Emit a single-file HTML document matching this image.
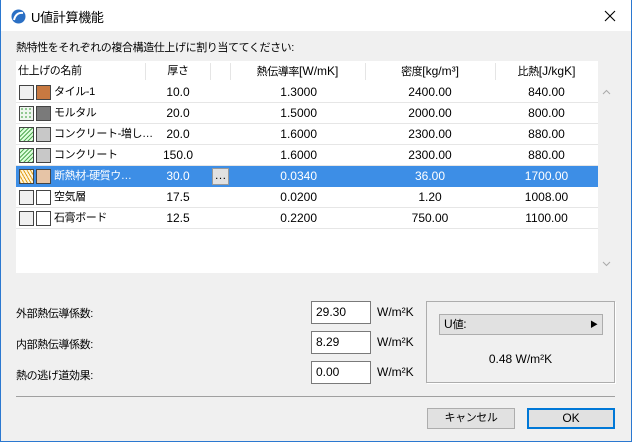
<!DOCTYPE html><html><head><meta charset="utf-8"><style>
*{box-sizing:border-box}
body{margin:0;width:632px;height:442px;overflow:hidden;background:#f0f0f0;font-family:"Liberation Sans","Noto Sans CJK JP",sans-serif;font-size:12px;color:#000;position:relative}
.abs{position:absolute}
.j{font-size:11px;letter-spacing:-0.4px}
.win{position:absolute;left:0;top:0;width:632px;height:442px;border:1px solid #2b78d0;border-top:none}
.title{position:absolute;left:0;top:0;width:632px;height:31px;background:#fff;border-left:1px solid #2b78d0;border-right:1px solid #2b78d0}
.tbl{position:absolute;left:16px;top:61px;width:598px;height:212px;background:#fff}
.row{position:absolute;left:0;width:582px;height:21px;border-bottom:1px solid #e6e6e6;line-height:20px}
.c{position:absolute;top:0;text-align:center}
.sw{position:absolute;top:3px;width:15px;height:15px;border:1px solid #444}
.inp{position:absolute;left:311px;width:60px;height:23px;background:#fff;border:1px solid #7a7a7a;padding-left:4px;line-height:21px}
.btn{position:absolute;height:21px;background:#e1e1e1;border:1px solid #adadad;text-align:center;line-height:19px}
</style></head><body>
<div class="win"></div>
<div class="title">
<svg class="abs" style="left:10px;top:9px" width="15" height="15" viewBox="0 0 15 15"><circle cx="7.5" cy="7.5" r="7" fill="#2a6fc4"/><path d="M3 11 Q5 3 12 4" stroke="#fff" stroke-width="2" fill="none"/></svg>
<div class="abs" style="left:30px;top:7px;font-size:13px;letter-spacing:-0.3px">U値計算機能</div>
<svg class="abs" style="left:603px;top:10px" width="12" height="12" viewBox="0 0 12 12"><path d="M1 1L11 11M11 1L1 11" stroke="#000" stroke-width="1.1"/></svg>
</div>
<div class="abs j" style="left:16px;top:39px">熱特性をそれぞれの複合構造仕上げに割り当ててください:</div>
<div class="tbl">
<div class="row" style="top:0;border-bottom:none;color:#000">
<div class="c j" style="left:2px;text-align:left">仕上げの名前</div>
<div class="c j" style="left:130px;width:64px">厚さ</div>
<div class="c" style="left:214px;width:135px"><span class="j">熱伝導率</span>[W/mK]</div>
<div class="c" style="left:349px;width:130px"><span class="j">密度</span>[kg/m³]</div>
<div class="c" style="left:479px;width:103px"><span class="j">比熱</span>[J/kgK]</div>
<div class="abs" style="left:129px;top:2px;width:1px;height:17px;background:#e5e5e5"></div>
<div class="abs" style="left:194px;top:2px;width:1px;height:17px;background:#e5e5e5"></div>
<div class="abs" style="left:214px;top:2px;width:1px;height:17px;background:#e5e5e5"></div>
<div class="abs" style="left:349px;top:2px;width:1px;height:17px;background:#e5e5e5"></div>
<div class="abs" style="left:479px;top:2px;width:1px;height:17px;background:#e5e5e5"></div>
</div>
<div class="row" style="top:21px"><div class="sw" style="left:3px;background:#f0f0f0"></div><div class="sw" style="left:20px;background:#c87941"></div><div class="c j" style="left:38px">タイル-1</div><div class="c" style="left:130px;width:64px">10.0</div><div class="c" style="left:214px;width:135px;text-align:right;padding-right:48px">1.3000</div><div class="c" style="left:349px;width:130px">2400.00</div><div class="c" style="left:479px;width:103px">840.00</div></div>
<div class="row" style="top:42px"><div class="sw" style="left:3px;background:radial-gradient(#5a5 0.7px,transparent 1px) 0 0/4px 4px #eef5ee"></div><div class="sw" style="left:20px;background:#7a7a7a"></div><div class="c j" style="left:38px">モルタル</div><div class="c" style="left:130px;width:64px">20.0</div><div class="c" style="left:214px;width:135px;text-align:right;padding-right:48px">1.5000</div><div class="c" style="left:349px;width:130px">2000.00</div><div class="c" style="left:479px;width:103px">800.00</div></div>
<div class="row" style="top:63px"><div class="sw" style="left:3px;background:repeating-linear-gradient(-45deg,#5a5 0 1px,#dfd 1px 3px)"></div><div class="sw" style="left:20px;background:#c8c8c8"></div><div class="c j" style="left:38px">コンクリート-増し…</div><div class="c" style="left:130px;width:64px">20.0</div><div class="c" style="left:214px;width:135px;text-align:right;padding-right:48px">1.6000</div><div class="c" style="left:349px;width:130px">2300.00</div><div class="c" style="left:479px;width:103px">880.00</div></div>
<div class="row" style="top:84px"><div class="sw" style="left:3px;background:repeating-linear-gradient(-45deg,#5a5 0 1px,#dfd 1px 3px)"></div><div class="sw" style="left:20px;background:#c8c8c8"></div><div class="c j" style="left:38px">コンクリート</div><div class="c" style="left:130px;width:64px">150.0</div><div class="c" style="left:214px;width:135px;text-align:right;padding-right:48px">1.6000</div><div class="c" style="left:349px;width:130px">2300.00</div><div class="c" style="left:479px;width:103px">880.00</div></div>
<div class="row" style="top:105px;background:#3d8ee6;color:#fff;border-bottom-color:#3d8ee6"><div class="sw" style="left:3px;background:repeating-linear-gradient(60deg,#e0a020 0 1px,#fff5d8 1px 3px)"></div><div class="sw" style="left:20px;background:#e6c4a6"></div><div class="c j" style="left:38px">断熱材-硬質ウ…</div><div class="c" style="left:130px;width:64px">30.0</div><div class="abs" style="left:196px;top:2px;width:17px;height:17px;background:#e1e1e1;border:1px solid #999;color:#000;line-height:12px;text-align:center">…</div><div class="c" style="left:214px;width:135px;text-align:right;padding-right:48px">0.0340</div><div class="c" style="left:349px;width:130px">36.00</div><div class="c" style="left:479px;width:103px">1700.00</div></div>
<div class="row" style="top:126px"><div class="sw" style="left:3px;background:#f0f0f0"></div><div class="sw" style="left:20px;background:#fff"></div><div class="c j" style="left:38px">空気層</div><div class="c" style="left:130px;width:64px">17.5</div><div class="c" style="left:214px;width:135px;text-align:right;padding-right:48px">0.0200</div><div class="c" style="left:349px;width:130px">1.20</div><div class="c" style="left:479px;width:103px">1008.00</div></div>
<div class="row" style="top:147px"><div class="sw" style="left:3px;background:#f0f0f0"></div><div class="sw" style="left:20px;background:#fff"></div><div class="c j" style="left:38px">石膏ボード</div><div class="c" style="left:130px;width:64px">12.5</div><div class="c" style="left:214px;width:135px;text-align:right;padding-right:48px">0.2200</div><div class="c" style="left:349px;width:130px">750.00</div><div class="c" style="left:479px;width:103px">1100.00</div></div>
<div class="abs" style="left:582px;top:0;width:16px;height:212px;background:#f0f0f0"></div>
<svg class="abs" style="left:586px;top:28px" width="9" height="6" viewBox="0 0 9 6"><path d="M1 5L4.5 1.5L8 5" stroke="#aaa" fill="none"/></svg>
<svg class="abs" style="left:586px;top:200px" width="9" height="6" viewBox="0 0 9 6"><path d="M1 1L4.5 4.5L8 1" stroke="#aaa" fill="none"/></svg>
</div>
<div class="abs j" style="left:16px;top:305px">外部熱伝導係数:</div>
<div class="abs j" style="left:16px;top:336px">内部熱伝導係数:</div>
<div class="abs j" style="left:16px;top:367px">熱の逃げ道効果:</div>
<div class="inp" style="top:301px">29.30</div>
<div class="inp" style="top:331px">8.29</div>
<div class="inp" style="top:361px">0.00</div>
<div class="abs" style="left:377px;top:305px">W/m²K</div>
<div class="abs" style="left:377px;top:335px">W/m²K</div>
<div class="abs" style="left:377px;top:365px">W/m²K</div>
<div class="abs" style="left:426px;top:301px;width:189px;height:82px;border:1px solid #adadad;box-shadow:1px 1px 0 #fff"></div>
<div class="abs" style="left:439px;top:314px;width:164px;height:21px;background:#e1e1e1;border:1px solid #adadad;padding-left:4px;line-height:19px">U<span class="j">値</span>:<span style="position:absolute;right:4px;font-size:8px">▶</span></div>
<div class="abs" style="left:426px;top:352px;width:189px;text-align:center">0.48 W/m²K</div>
<div class="abs" style="left:16px;top:396px;width:599px;height:1px;background:#a0a0a0"></div>
<div class="btn j" style="left:427px;top:408px;width:88px">キャンセル</div>
<div class="btn" style="left:527px;top:408px;width:88px;border:2px solid #0078d7;line-height:17px">OK</div>
</body></html>
